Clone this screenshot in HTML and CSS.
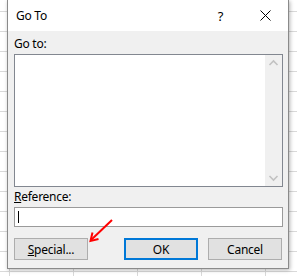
FILE: index.html
```html
<!DOCTYPE html>
<html lang="en">
<head>
    <meta charset="UTF-8">
    <title>Go To</title>
    <link rel="stylesheet" href="styles.css">
</head>
<body>

    <div class="dialog">
        <div class="titlebar">
            <span class="title">Go To</span>
            <span class="tb-btn help">?</span>
            <span class="tb-btn close">
                <svg width="11" height="11" viewBox="0 0 11 11"><path d="M0.5 0.5 L10.5 10.5 M10.5 0.5 L0.5 10.5" stroke="#000" stroke-width="1" fill="none"/></svg>
            </span>
        </div>

        <div class="content">
            <label class="field-label">Go to:</label>
            <div class="listbox">
                <div class="list-items"></div>
                <div class="scrollbar">
                    <svg width="17" height="17" viewBox="0 0 17 17"><polyline points="4.5,10 8.5,6 12.5,10" stroke="#c2c2c2" stroke-width="1.6" fill="none"/></svg>
                    <svg width="17" height="17" viewBox="0 0 17 17"><polyline points="4.5,7 8.5,11 12.5,7" stroke="#c2c2c2" stroke-width="1.6" fill="none"/></svg>
                </div>
            </div>

            <label class="field-label"><u>R</u>eference:</label>
            <div class="textbox"><span class="caret"></span></div>

            <div class="buttons">
                <button class="btn"><u>S</u>pecial...</button>
                <button class="btn default">OK</button>
                <button class="btn cancel">Cancel</button>
            </div>
        </div>
    </div>

    <!-- red annotation arrow pointing at the Special button -->
    <svg class="arrow" width="297" height="276" viewBox="0 0 297 276">
        <line x1="112" y1="220" x2="91" y2="240" stroke="#f00" stroke-width="2"/>
        <polyline points="92.5,232.5 90.5,241 98.5,239" stroke="#f00" stroke-width="2" fill="none"/>
    </svg>

</body>
</html>
```

FILE: styles.css
```css
body {
    margin: 0;
    height: 276px;
    overflow: hidden;
    font-family: "Segoe UI", "Noto Sans", sans-serif;
    font-size: 12px;
    letter-spacing: -0.25px;
    color: #000;
    background-color: #fff;
    /* spreadsheet grid behind the dialog */
    background-image:
        linear-gradient(to bottom, #d9d9d9 1px, transparent 1px),
        linear-gradient(to right, #d9d9d9 1px, transparent 1px);
    background-size: 100% 20px, 64px 100%;
    background-position: 0 11px, 9px 0;
}

.dialog {
    width: 280px;
    margin-left: 7px;
    border: 1px solid #8a8a8a;
    border-top: none;
    background-color: #f0f0f0;
    box-shadow: 1px 1px 4px rgba(0, 0, 0, 0.3);
}

.titlebar {
    display: flex;
    align-items: center;
    height: 31px;
    background-color: #fff;
}
.title {
    flex: 1;
    padding-left: 8px;
}
.tb-btn {
    width: 45px;
    height: 31px;
    display: flex;
    align-items: center;
    justify-content: center;
}
.help {
    font-size: 13px;
}

.content {
    padding: 5px 5px 8px 6px;
}

.field-label {
    display: block;
    height: 16px;
    line-height: 16px;
    margin-bottom: 2px;
}

.listbox {
    display: flex;
    height: 133px;
    box-sizing: border-box;
    border: 1px solid #828790;
    margin-bottom: 2px;
}
.list-items {
    flex: 1;
    background-color: #fff;
}
.scrollbar {
    width: 17px;
    display: flex;
    flex-direction: column;
    justify-content: space-between;
    background-color: #f0f0f0;
}
.scrollbar svg {
    display: block;
}

.textbox {
    height: 20px;
    box-sizing: border-box;
    border: 1px solid #9a9a9a;
    background-color: #fff;
    margin-bottom: 11px;
}
.caret {
    display: block;
    width: 1px;
    height: 12px;
    margin: 3px 0 0 3px;
    background-color: #000;
}

.buttons {
    display: flex;
}
.btn {
    width: 74px;
    height: 22px;
    box-sizing: border-box;
    padding: 0;
    border: 1px solid #adadad;
    background-color: #e1e1e1;
    font-family: inherit;
    font-size: 12px;
    letter-spacing: inherit;
    color: #000;
}
.btn.default {
    margin-left: auto;
    border: 2px solid #0078d7;
}
.btn.cancel {
    margin-left: 10px;
    margin-right: 1px;
}

.arrow {
    position: absolute;
    left: 0;
    top: 0;
    pointer-events: none;
}
```
